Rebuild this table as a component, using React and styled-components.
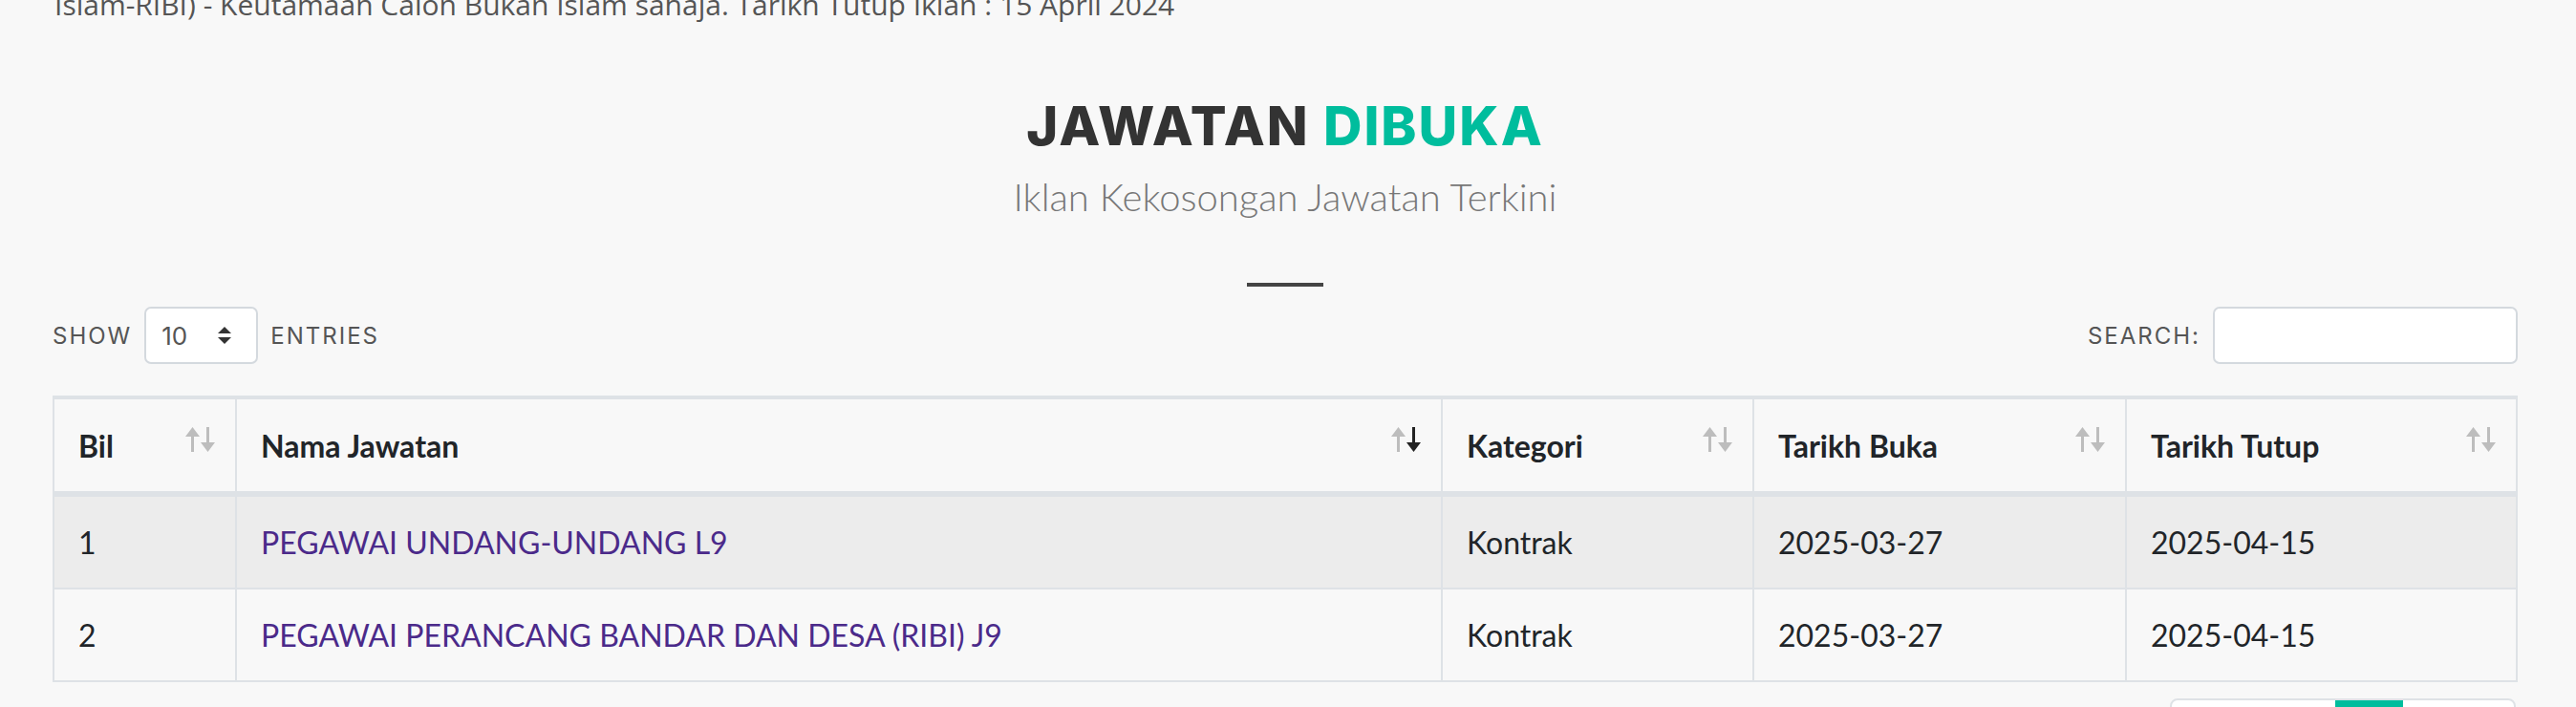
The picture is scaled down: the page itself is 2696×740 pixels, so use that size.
import styled, { createGlobalStyle } from "styled-components";

const GlobalStyle = createGlobalStyle`
  * { box-sizing: border-box; }
  body {
    margin: 0;
    background: #f8f8f8;
    font-family: Lato, "Open Sans", sans-serif;
    color: #212529;
    overflow: hidden;
  }
`;

const jobs = [
  { bil: 1, nama: "PEGAWAI UNDANG-UNDANG L9", kategori: "Kontrak", buka: "2025-03-27", tutup: "2025-04-15" },
  { bil: 2, nama: "PEGAWAI PERANCANG BANDAR DAN DESA (RIBI) J9", kategori: "Kontrak", buka: "2025-03-27", tutup: "2025-04-15" },
];

const columns = [
  { label: "Bil", width: 193 },
  { label: "Nama Jawatan", width: 1262, sorted: true },
  { label: "Kategori", width: 326 },
  { label: "Tarikh Buka", width: 390 },
  { label: "Tarikh Tutup", width: 409 },
];

const SortIcon = ({ active }) => (
  <SortSvg viewBox="0 0 31 26" width="31" height="26">
    <polygon points="0,10 7.5,0 15,10" fill="#bdbdbd" />
    <rect x="6" y="8" width="3" height="18" fill="#bdbdbd" />
    <polygon points="16,16 23.5,26 31,16" fill={active ? "#222" : "#bdbdbd"} />
    <rect x="22" y="0" width="3" height="18" fill={active ? "#222" : "#bdbdbd"} />
  </SortSvg>
);

const App = () => {
  return (
    <>
      <GlobalStyle />
      <Notice>
        Islam-RIBI) - Keutamaan Calon Bukan Islam sahaja. Tarikh Tutup Iklan : 15 April 2024
      </Notice>
      <Section>
        <Heading>
          <Title>
            JAWATAN <Accent>DIBUKA</Accent>
          </Title>
          <Subtitle>Iklan Kekosongan Jawatan Terkini</Subtitle>
          <Divider />
        </Heading>

        <Controls>
          <ControlGroup>
            <ControlLabel>Show</ControlLabel>
            <SelectBox>
              <span>10</span>
              <svg width="16" height="20" viewBox="0 0 16 20">
                <polygon points="1,8 8,1 15,8" fill="#333" />
                <polygon points="1,12 8,19 15,12" fill="#333" />
              </svg>
            </SelectBox>
            <ControlLabel>Entries</ControlLabel>
          </ControlGroup>
          <ControlGroup>
            <ControlLabel>Search:</ControlLabel>
            <SearchInput type="text" />
          </ControlGroup>
        </Controls>

        <Table>
          <colgroup>
            {columns.map((c) => (
              <col key={c.label} style={{ width: c.width }} />
            ))}
          </colgroup>
          <thead>
            <tr>
              {columns.map((c) => (
                <HeadCell key={c.label}>
                  <HeadInner>
                    <span>{c.label}</span>
                    <SortIcon active={c.sorted} />
                  </HeadInner>
                </HeadCell>
              ))}
            </tr>
          </thead>
          <tbody>
            {jobs.map((job, i) => (
              <Row key={job.bil} $striped={i % 2 === 0}>
                <Cell>{job.bil}</Cell>
                <Cell>
                  <JobLink href="#">{job.nama}</JobLink>
                </Cell>
                <Cell>{job.kategori}</Cell>
                <Cell>{job.buka}</Cell>
                <Cell>{job.tutup}</Cell>
              </Row>
            ))}
          </tbody>
        </Table>

        <PaginationRow>
          <Pagination>
            <PageButton $w={171}>Previous</PageButton>
            <PageButton $w={71} $active>1</PageButton>
            <PageButton $w={116}>Next</PageButton>
          </Pagination>
        </PaginationRow>
      </Section>
    </>
  );
};

export default App;

const Notice = styled.p`
  margin: -15px 0 0;
  padding-left: 57px;
  font-family: "Open Sans", sans-serif;
  font-size: 30px;
  line-height: 40px;
  color: #555;
  white-space: nowrap;
`;

const Section = styled.section`
  margin: 0 61px 0 55px;
`;

const Heading = styled.div`
  display: flex;
  flex-direction: column;
  align-items: center;
`;

const Title = styled.h2`
  margin: 74px 0 0;
  font-family: Inter, sans-serif;
  font-weight: 800;
  font-size: 56px;
  line-height: 67px;
  letter-spacing: 2px;
  color: #333;
`;

const Accent = styled.span`
  color: #00bd9d;
`;

const Subtitle = styled.p`
  margin: 16px 0 0;
  font-family: Lato, sans-serif;
  font-weight: 300;
  font-size: 40px;
  line-height: 48px;
  color: #777;
`;

const Divider = styled.div`
  width: 80px;
  height: 4px;
  margin-top: 66px;
  background: #444;
`;

const Controls = styled.div`
  display: flex;
  justify-content: space-between;
  align-items: center;
  margin-top: 21px;
  height: 60px;
`;

const ControlGroup = styled.div`
  display: flex;
  align-items: center;
  gap: 13px;
`;

const ControlLabel = styled.span`
  font-family: Inter, sans-serif;
  font-size: 24px;
  letter-spacing: 2px;
  text-transform: uppercase;
  color: #555;
`;

const SelectBox = styled.div`
  display: flex;
  align-items: center;
  justify-content: space-between;
  width: 119px;
  height: 60px;
  padding: 0 25px 0 16px;
  background: #fff;
  border: 2px solid #d4d9de;
  border-radius: 7px;
  font-family: Inter, sans-serif;
  font-size: 26px;
  color: #555;
`;

const SearchInput = styled.input`
  width: 319px;
  height: 60px;
  background: #fff;
  border: 2px solid #d4d9de;
  border-radius: 7px;
  outline: none;
`;

const Table = styled.table`
  width: 2580px;
  margin-top: 33px;
  table-layout: fixed;
  border-collapse: separate;
  border-spacing: 0;
`;

const HeadCell = styled.th`
  height: 106px;
  padding: 0 21px 0 25px;
  text-align: left;
  font-weight: 700;
  font-size: 32px;
  color: #212529;
  border-top: 4px solid #dee2e6;
  border-bottom: 6px solid #dee2e6;
  border-right: 2px solid #dee2e6;
  &:first-child {
    border-left: 2px solid #dee2e6;
  }
`;

const HeadInner = styled.div`
  display: flex;
  justify-content: space-between;
  align-items: center;
`;

const SortSvg = styled.svg`
  flex-shrink: 0;
  margin-bottom: 12px;
`;

const Row = styled.tr`
  background: ${(p) => (p.$striped ? "#ececec" : "#f8f8f8")};
`;

const Cell = styled.td`
  height: 97px;
  padding: 0 25px;
  font-size: 32px;
  color: #212529;
  border-bottom: 2px solid #dee2e6;
  border-right: 2px solid #dee2e6;
  &:first-child {
    border-left: 2px solid #dee2e6;
  }
`;

const JobLink = styled.a`
  color: #4b2a8a;
  text-decoration: none;
`;

const PaginationRow = styled.div`
  display: flex;
  justify-content: flex-end;
  margin-top: 17px;
`;

const Pagination = styled.div`
  display: flex;
  height: 60px;
  border: 2px solid #dee2e6;
  border-radius: 8px;
  overflow: hidden;
  background: #fff;
  margin-right: 2px;
`;

const PageButton = styled.div`
  width: ${(p) => p.$w}px;
  display: flex;
  align-items: center;
  justify-content: center;
  font-size: 26px;
  color: ${(p) => (p.$active ? "#fff" : "#555")};
  background: ${(p) => (p.$active ? "#00bd9d" : "transparent")};
`;
